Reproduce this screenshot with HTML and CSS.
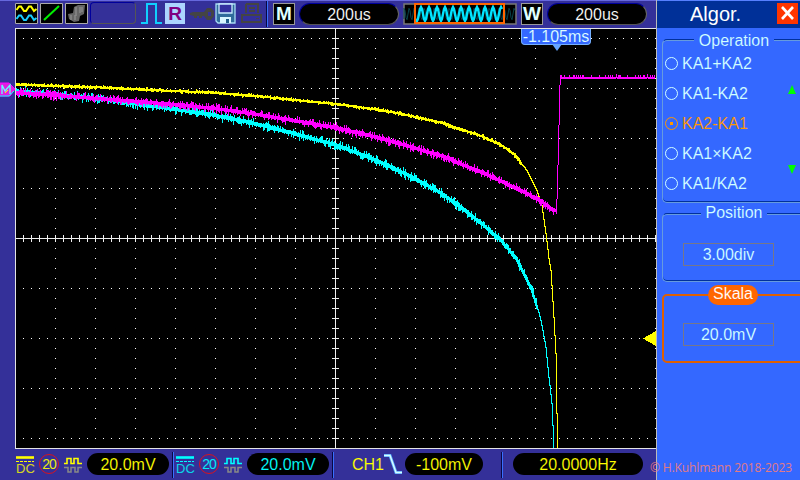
FILE: index.html
```html
<!DOCTYPE html>
<html lang="en">
<head>
<meta charset="utf-8">
<title>Oscilloscope</title>
<link rel="stylesheet" href="styles.css">
</head>
<body>
<div class="screen">
  <main class="scope">
    <header class="topbar">
      <svg class="tile" width="23" height="21" viewBox="0 0 23 21"><path class="tile-box" d="M.5.5h22v20H.5z"/><path d="M1.5 7L4 3.5L6 3.5L9 8L11 8L14 3.5L16 3.5L19 8L21.5 6" fill="none" stroke="#ff0" stroke-width="2"/><path d="M1.5 16L4 12.5L6 12.5L9 17L11 17L14 12.5L16 12.5L19 17L21.5 15" fill="none" stroke="#19cfff" stroke-width="2"/></svg>
      <svg class="tile" width="23" height="21" viewBox="0 0 23 21"><path class="tile-box" d="M.5.5h22v20H.5z"/><path d="M4 17L19 3" stroke="#00f000" stroke-width="2"/></svg>
      <svg class="tile" width="23" height="21" viewBox="0 0 23 21"><path class="tile-box" d="M.5.5h22v20H.5z"/><path d="M9 4L13 2L20 2L19 11L15 13L14 18L9 19L4 16L3 11L8 10Z" fill="#666"/><path d="M11 4v9M15 4v6M6 12v5M10 12v5M17 4v5" stroke="#888" stroke-width="1.5"/></svg>
      <span class="empty-slot"></span>
      <svg class="pulse" width="22" height="22"><path d="M0 20H6V1H15V20H21" fill="none" stroke="#10cfff" stroke-width="2"/></svg>
      <b class="run">R</b>
      <svg class="key" width="24" height="13" viewBox="0 0 24 13"><path fill-rule="evenodd" d="M0 5L3 4H14L17 0H21L24 3V8L21 12H17L14 8H12V10H9V8H7V10H4V8L0 7ZM18 4V8H21V4Z" fill="#444"/></svg>
      <svg class="disk" width="21" height="21" viewBox="0 0 21 21"><path d="M1 1H20V20H3L1 18Z" fill="#306b9b" stroke="#a8dcf4" stroke-width="1.3"/><path d="M4 1V10H17V1Z" fill="#3430a0" stroke="#c9eaff" stroke-width="1.3"/><path d="M5 14H16V20H5Z" fill="#d8f5ff"/><path d="M11 16h3v4h-3z" fill="#215b88"/></svg>
      <svg class="printer" width="21" height="21" viewBox="0 0 21 21"><path d="M5 1H17V10M5 1V10M8 5H14M8 8H14M1 19V12H20V19ZM2 12H19" fill="none" stroke="#444" stroke-width="2"/><path d="M15 15h3v1h-3z" fill="#444"/></svg>
      <i class="rule rule-top"></i>
      <b class="mode">M</b>
      <span class="pill time">200us</span>
      <svg class="record" width="114" height="22"><path d="M1 1H113V21H1Z" fill="#000" stroke="#777" stroke-width="1.5"/><path id="dim-wave" fill="none" stroke="#07434c"/><path id="wave" fill="none" stroke="#00e5ff" stroke-width="2.4"/><path d="M12 1H101V20H12Z" fill="none" stroke="#f60" stroke-width="2"/></svg>
      <b class="mode mode-w">W</b>
      <span class="pill time">200us</span>
    </header>
    <section class="display">
      <svg id="plot" width="641" height="421" viewBox="15 28 641 421" shape-rendering="crispEdges">
        <path d="M15 28H656V449H15Z" fill="#000"/>
        <path id="dots" fill="#fff"/>
        <path id="axes" fill="#f0f0f0"/>
        <path id="yellow" fill="#ff0"/>
        <path id="cyan" fill="#0ff"/>
        <path id="magenta" fill="#f0f"/>
        <path d="M15 28H656V29H16V448H656V449H15Z" fill="#e4e4e4"/>
        <path d="M643 338.5L656 331V346Z" fill="#ff0"/>
      </svg>
      <svg class="math-marker" width="16" height="16" viewBox="0 0 16 16"><path d="M0 1H9L15 7L10 14H0Z" fill="#e020e0" stroke="#f0f"/><path d="M0 14H9L14 9" fill="none" stroke="#0ff"/><path d="M2 12V3L5 9L10 3V12" fill="none" stroke="#6ff" stroke-width="1.3"/><path d="M5 11L8 8" stroke="#ff0"/></svg>
      <div class="trigger-time">-1.105ms</div>
    </section>
    <footer class="bottombar">
      <div class="channel ch1">
        <span class="dc"><svg width="18" height="7"><path d="M0 1.5H18" stroke="currentColor" stroke-width="2.6"/><path d="M0 5.5H18" stroke="currentColor" stroke-dasharray="3 1"/></svg><span>DC</span></span>
        <span class="limit">20</span>
        <svg class="coupling" width="18" height="17"><path d="M0 6.5H3V1.5H7V6.5H10V1.5H14V6.5H18" fill="none" stroke="currentColor" stroke-width="1.6"/><path d="M0 10.5H4V15H7V10.5H11V15H14V10.5H18" fill="none" stroke="#888" stroke-width="1.5"/></svg>
        <span class="pill">20.0mV</span>
      </div>
      <i class="rule"></i>
      <div class="channel ch2">
        <span class="dc"><svg width="18" height="7"><path d="M0 1.5H18" stroke="currentColor" stroke-width="2.6"/><path d="M0 5.5H18" stroke="currentColor" stroke-dasharray="3 1"/></svg><span>DC</span></span>
        <span class="limit">20</span>
        <svg class="coupling" width="18" height="17"><path d="M0 6.5H3V1.5H7V6.5H10V1.5H14V6.5H18" fill="none" stroke="currentColor" stroke-width="1.6"/><path d="M0 10.5H4V15H7V10.5H11V15H14V10.5H18" fill="none" stroke="#888" stroke-width="1.5"/></svg>
        <span class="pill">20.0mV</span>
      </div>
      <i class="rule"></i>
      <span class="source">CH1</span>
      <svg class="slope" width="18" height="20"><path d="M0 1.5H6L12 18.5H18" fill="none" stroke="#58aaff" stroke-width="3"/><path d="M0 1.5H6L12 18.5H18" fill="none" stroke="#d5ffff" stroke-width="1.5"/></svg>
      <span class="pill level">-100mV</span>
      <i class="rule rule-last"></i>
      <span class="pill frequency">20.0000Hz</span>
    </footer>
  </main>
  <aside class="menu">
    <header class="menu-head"><h1>Algor.</h1><button class="close"><svg width="21" height="21"><path d="M5 4L16 16M16 4L5 16" stroke="#fff" stroke-width="2.6"/></svg></button></header>
    <section class="group operation">
      <h2><span>Operation</span></h2>
      <ul>
        <li><i></i>KA1+KA2</li>
        <li><i></i>KA1-KA2</li>
        <li class="on"><i></i>KA2-KA1</li>
        <li><i></i>KA1×KA2</li>
        <li><i></i>KA1/KA2</li>
      </ul>
      <svg class="arrows" width="8" height="90"><path d="M4 0L8 9H0ZM0 80H8L4 89Z" fill="#0f0"/></svg>
    </section>
    <section class="group position"><h2><span>Position</span></h2><div class="value">3.00div</div></section>
    <section class="group scale"><h2><span>Skala</span></h2><div class="value">20.0mV</div></section>
  </aside>
  <div class="credit">© H.Kuhlmann 2018-2023</div>
</div>
<script src="scope.js"></script>
</body>
</html>
```
FILE: styles.css
```css
* { box-sizing: border-box; }
body { margin: 0; background: #333399; font: 16px/20px "Liberation Sans", Arial, sans-serif; }
h1, h2, ul { margin: 0; padding: 0; font-weight: normal; }
svg { display: block; flex: none; }
.screen { position: relative; display: grid; grid-template-columns: 656px 144px; width: 800px; height: 480px; overflow: hidden; }
.scope { display: grid; grid-template-rows: 28px 421px 31px; background: #343099; }
.topbar { display: flex; align-items: flex-start; padding: 3px 0 0 15px; box-shadow: inset 0 1px #6668dd; }
.tile { margin-right: 2px; }
.tile-box { fill: #000; stroke: #aaa; }
.empty-slot { width: 46px; height: 22px; margin-top: -1px; border: 1px solid #00009c; border-right-color: #555; border-bottom-color: #555; border-radius: 4px; }
.pulse { margin-left: 5px; }
.run { width: 20px; height: 21px; margin-left: 2px; background: #acd5ff; color: #800080; font-size: 19px; line-height: 21px; text-align: center; }
.key { margin: 5px 0 0 5px; }
.disk { margin-left: 1px; }
.printer { margin-left: 5px; }
.rule { flex: none; width: 2px; height: 26px; border-left: 1px solid #080844; border-right: 1px solid #3870ff; }
.rule-top { margin: -2px 0 0 4px; }
.mode { width: 22px; height: 22px; margin: 0 4px 0 5px; background: #000; border: 1px solid #999; color: #dfffff; font-size: 19px; line-height: 20px; display: flex; justify-content: center; }
.mode-w { margin-left: 4px; }
/* A background-coloured outline gives the readouts their thin strokes. */
.pill { display: block; flex: none; width: 82px; height: 22px; border-radius: 11px; background: #000; line-height: 23px; text-align: center; -webkit-text-stroke: .12px #000; }
.pill.time { width: 100px; color: #fff; border: 1px solid #00009c; border-right-color: #666; border-bottom-color: #555; line-height: 21px; }
.record { margin-left: 4px; }
.display { position: relative; padding-left: 15px; }
.math-marker { position: absolute; left: 0; top: 54px; }
.trigger-time { position: absolute; left: 521px; top: 1px; width: 70px; height: 16px; background: #3468ff; border: 1px solid #75b0ff; border-top: 0; border-radius: 0 0 4px 4px; color: #dfffff; line-height: 16px; text-align: center; white-space: nowrap; -webkit-text-stroke: .1px #3468ff; }
.trigger-time::after { content: ""; position: absolute; left: 30px; top: 15px; border: 5px solid transparent; border-top: 7px solid #65a4ff; border-bottom: 0; }
.bottombar { display: flex; align-items: flex-start; padding: 4px 0 0 16px; color: #ff0; }
.bottombar .rule { margin: -1px 0 0 3px; }
.channel { display: flex; }
.ch2 { margin-left: 2px; color: #0ff; }
.dc { width: 18px; padding-top: 3px; }
.dc span { display: block; font-size: 13px; line-height: 12px; opacity: .8; }
.limit { width: 20px; height: 20px; margin: 1px 0 0 5px; border: 1.5px solid #ed1010; border-radius: 50%; font-size: 14px; line-height: 18px; letter-spacing: -1px; text-align: center; opacity: .9; }
.coupling { margin: 4px 5px 0; }
.source { width: 32px; margin-left: 18px; line-height: 23px; -webkit-text-stroke: .12px #343099; }
.slope { margin-top: 1px; }
.level { width: 78px; margin-left: 3px; }
.bottombar .rule-last { margin-left: 18px; }
.frequency { width: 130px; margin-left: 10px; }
.menu { border-left: 1px solid #bbb; background: #3468ff; color: #d2ffff; overflow: hidden; -webkit-text-stroke: .1px #3468ff; }
.menu-head { display: flex; height: 28px; padding: 3px 0 0 33px; background: #003098; border-top: 1px solid #5680ff; color: #fff; -webkit-text-stroke: 0; }
.menu-head h1 { width: 87px; font-size: 20px; line-height: 21px; }
.close { width: 21px; height: 21px; margin: -1px 0 0; padding: 0; border: 0; background: #ff3500; }
.group { position: relative; width: 144px; margin-left: 5px; border: 1px solid #00309c; border-left-color: #669bde; border-bottom-color: #669bde; border-radius: 5px; box-shadow: inset 0 1px #669bde, inset 0 -1px #00309c; }
.group h2 { height: 20px; margin-top: -10px; text-align: center; font-size: 16px; line-height: 22px; }
.group h2 span { display: inline-block; padding: 0 5px; background: linear-gradient(transparent 5px, #3468ff 5px); }
.operation { height: 164px; margin-top: 11px; }
.operation li { display: flex; align-items: center; height: 30px; padding-left: 2px; list-style: none; }
.operation ul { margin-top: -1px; }
.operation li i { width: 13px; height: 13px; margin: -1px 4px 0 0; border: 1px solid currentColor; border-radius: 50%; }
.operation .on { color: #ff9900; }
.on i { display: grid; place-items: center; }
.on i::after { content: ""; width: 3px; height: 3px; background: currentColor; }
.arrows { position: absolute; left: 125px; top: 45px; }
.position { height: 69px; margin-top: 10px; }
.position h2 { margin-top: -12px; }
.position .value { margin-top: 21px; }
.scale { height: 69px; margin-top: 12px; border: 2px solid #e06000; box-shadow: none; }
.value { width: 91px; height: 23px; margin: 19px 0 0 20px; border: 1px solid #777788; line-height: 21px; text-align: center; }
.scale .value { margin-left: 19px; margin-top: 20px; }
.group.scale h2 { margin: -13px 2px 0 0; }
.group.scale h2 span { height: 20px; background: #ff6600; border-radius: 10px; line-height: 18px; color: #fff; -webkit-text-stroke: .1px #f60; }
.credit { position: absolute; left: 650px; top: 460px; font: 12px/16px "Open Sans", sans-serif; color: #e07a85; white-space: nowrap; letter-spacing: -.12px; }
```
FILE: scope.js
```js
// Deterministic sample noise keeps the traces stable between loads.
let seed = 731;
function random() {
  seed = (seed * 1664525 + 1013904223) >>> 0;
  return seed / 4294967296;
}

const box = (x, y, w, h) => `M${x} ${y}h${w}v${h}h${-w}z`;

// Graticule: 40 x 50 px divisions with five subdivisions.
let dots = "", axes = box(15, 238, 641, 1) + box(335, 28, 1, 421);
for (let x = 23; x < 656; x += 8) {
  for (let y = 38; y < 448; y += 50) dots += box(x, y, 1, 1);
  axes += box(x, 235, 1, 7);
}
for (let y = 38; y < 448; y += 10) {
  for (let x = 55; x <= 655; x += 40) dots += box(x, y, 1, 1);
  axes += box(332, y, 7, 1);
}
document.getElementById("dots").setAttribute("d", dots);
document.getElementById("axes").setAttribute("d", axes);

// Each pixel column becomes one vertical bar spanning the sampled range.
function trace(id, points, thickness, noise, calmFrom) {
  let d = "", k = 0, start = points[0][0], end = points[points.length - 1][0];
  const at = x => {
    while (k < points.length - 2 && x > points[k + 1][0]) k++;
    const [a, b] = [points[k], points[k + 1]];
    return b[1] * (x - a[0]) / (b[0] - a[0]) + a[1] * (b[0] - x) / (b[0] - a[0]);
  };
  let previous = at(start);
  for (let x = start; x <= end; x++) {
    const y = at(x), calm = x > calmFrom;
    const up = calm ? 0 : Math.pow(random(), 3) * noise;
    const down = calm ? 0 : Math.pow(random(), 3) * noise;
    const size = calm ? 1 : thickness;
    const top = Math.round(Math.min(y, previous) - size / 2 - up);
    const bottom = Math.max(top + 1, Math.round(Math.max(y, previous) + size / 2 + down));
    d += box(x, top, 1, Math.min(448, bottom) - top);
    previous = y;
  }
  document.getElementById(id).setAttribute("d", d);
}

trace("yellow", [[16,84.5],[55,86],[100,87.5],[150,90],[210,92.5],[260,96.5],[300,100.7],[335,104],[375,109.5],[400,113.7],[440,122.7],[460,129.5],[480,136],[500,145],[513,154],[525,169],[535,188],[541,205],[545,233],[548,258],[550,270],[553,317],[555,353],[556,413],[557,448]], 2, 1.5, 520);
trace("cyan", [[16,91],[50,94],[100,99],[150,106],[210,114.5],[260,125],[300,135.5],[335,145],[375,160],[413,178],[440,193],[460,207.5],[480,223],[500,240.5],[515,258],[530,288],[535,302],[540,320],[545,347],[548,377],[551,403],[553,447]], 3.2, 4, 536);
trace("magenta", [[16,92.7],[50,95],[100,98.8],[150,102.7],[210,108],[260,115],[300,121.7],[335,127.7],[375,137],[413,148],[440,155.5],[460,164],[480,172],[500,181],[520,190.5],[540,201],[550,209],[556,211]], 3.2, 3.8, 999);

let rise = box(556, 199, 1, 12) + box(557, 165, 1, 34) + box(558, 125, 1, 40) + box(559, 85, 1, 40) + box(560, 75, 1, 10);
for (let x = 561; x < 655; x++) {
  const tall = random() < 0.3 ? 1 : 0;
  rise += box(x, 77 - tall * (random() < 0.9 ? 2 : 3), 1, 2 + tall * 2);
}
const magenta = document.getElementById("magenta");
magenta.setAttribute("d", magenta.getAttribute("d") + rise);

// Acquisition memory preview.
let wave = "M13 16", dim = "M1 16";
for (let x = 13; x <= 99; x++) wave += `L${x} ${(11 - 7 * Math.sin((x - 16) * Math.PI / 4)).toFixed(1)}`;
for (let x = 1; x < 113; x++) dim += `L${x} ${(11 - 6 * Math.sin(x * Math.PI / 2.5)).toFixed(1)}`;
document.getElementById("wave").setAttribute("d", wave);
document.getElementById("dim-wave").setAttribute("d", dim);
```
